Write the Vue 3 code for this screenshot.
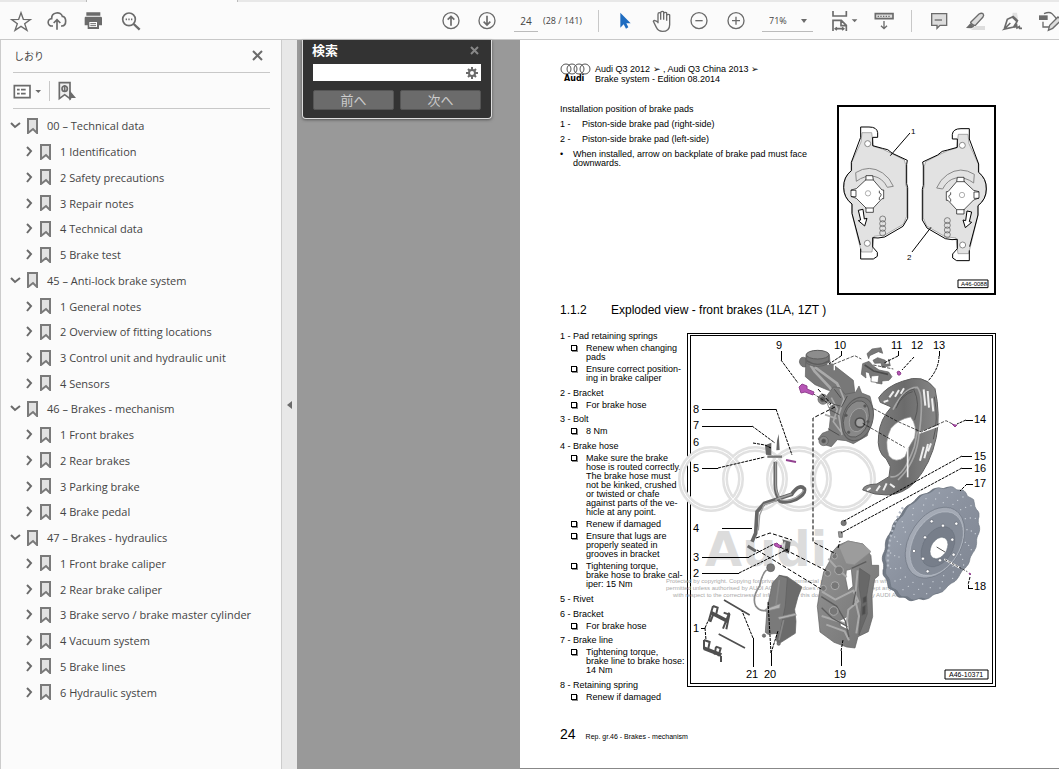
<script setup>
import { ref } from 'vue'

const page = ref('24')
const scale = ref('71%')
const query = ref('')

const chapters = [
  ['00 – Technical data', ['1 Identification', '2 Safety precautions', '3 Repair notes', '4 Technical data', '5 Brake test']],
  ['45 – Anti-lock brake system', ['1 General notes', '2 Overview of fitting locations', '3 Control unit and hydraulic unit', '4 Sensors']],
  ['46 – Brakes - mechanism', ['1 Front brakes', '2 Rear brakes', '3 Parking brake', '4 Brake pedal']],
  ['47 – Brakes - hydraulics', ['1 Front brake caliper', '2 Rear brake caliper', '3 Brake servo / brake master cylinder', '4 Vacuum system', '5 Brake lines', '6 Hydraulic system']],
]
const rows = chapters.flatMap(([title, kids]) => [
  { title, top: true },
  ...kids.map((k) => ({ title: k, top: false })),
])

const parts = [
  ['1 - Pad retaining springs', [['Renew when changing', 'pads'], ['Ensure correct position-', 'ing in brake caliper']]],
  ['2 - Bracket', [['For brake hose']]],
  ['3 - Bolt', [['8 Nm']]],
  ['4 - Brake hose', [
    ['Make sure the brake', 'hose is routed correctly.', 'The brake hose must', 'not be kinked, crushed', 'or twisted or chafe', 'against parts of the ve-', 'hicle at any point.'],
    ['Renew if damaged'],
    ['Ensure that lugs are', 'properly seated in', 'grooves in bracket'],
    ['Tightening torque,', 'brake hose to brake cal-', 'iper: 15 Nm'],
  ]],
  ['5 - Rivet', []],
  ['6 - Bracket', [['For brake hose']]],
  ['7 - Brake line', [['Tightening torque,', 'brake line to brake hose:', '14 Nm']]],
  ['8 - Retaining spring', [['Renew if damaged']]],
]

// Tilted ellipse used for the brake disc and everything drilled into it
const tilt = (31 * Math.PI) / 180
function onDisc(cx, cy, k, angle) {
  const u = 129 * k * Math.cos(angle)
  const v = 191 * k * Math.sin(angle)
  return [
    Math.round(cx + u * Math.cos(tilt) + v * Math.sin(tilt)),
    Math.round(cy + u * Math.sin(tilt) - v * Math.cos(tilt)),
  ]
}
function ring(cx, cy, k, ripple = 0) {
  const pts = []
  for (let i = 0; i < 180; i++) {
    const a = (i / 180) * Math.PI * 2
    pts.push(onDisc(cx, cy, k * (1 + ripple * Math.cos(a * 20)), a).join(' '))
  }
  return 'M' + pts.join('L') + 'Z'
}
const drillHoles = []
for (let i = 0; i < 20; i++) {
  const a = (i / 20) * Math.PI * 2
  drillHoles.push(onDisc(744, 130, 0.69, a + 0.1), onDisc(744, 130, 0.78, a + 0.03), onDisc(744, 130, 0.87, a - 0.05))
}
const boltHoles = Array.from({ length: 10 }, (_, i) => onDisc(755, 133, i % 2 ? 0.32 : 0.46, (i / 10) * Math.PI * 2))

const labels = [
  [9, 776, 349], [10, 834, 349], [11, 891, 349], [12, 911, 349], [13, 933, 349],
  [8, 693, 413], [7, 693, 429], [6, 693, 446], [5, 693, 472], [14, 974, 423],
  [15, 974, 460], [16, 974, 472], [17, 974, 487], [4, 693, 532], [3, 693, 561],
  [2, 693, 577], [18, 974, 590], [1, 693, 632], [21, 746, 678], [20, 764, 678], [19, 834, 678],
]
</script>

<template>
  <div class="viewer">
    <div class="tabs"><span class="tab"></span></div>
    <header class="toolbar">
      <div class="group files">
        <button aria-label="Star"><svg viewBox="27 30 72 66"><path d="M63 38l7 20 21 1-17 12 7 20-18-12-18 12 7-20-17-12 21-1z" fill="none" /></svg></button>
        <button aria-label="Upload"><svg viewBox="135 30 72 66"><path d="M159 78h-3a11 11 0 0 1-1-22c-1-20 28-23 32-7 13-1 14 29-1 29h-3" fill="none" stroke-width="5" /><path d="M171 89V60M161 69l10-10 10 10" fill="none" stroke-width="5" /></svg></button>
        <button aria-label="Print"><svg viewBox="243 30 72 66"><path class="solid" d="M259 37h42v10h-42zM257 50h45q4 0 4 4v22h-9v11h-34V76h-9V54q0-4 3-4z" /><path d="M268 66h23v15h-23z" fill="#fff" stroke="none" /><path d="M271 71h17M271 77h17" stroke-width="3" /></svg></button>
        <button class="find" aria-label="Search"><svg viewBox="357 30 72 66"><circle cx="387" cy="58" r="19" fill="none" stroke-width="5" /><path d="M401 72l18 17" stroke-width="7" /><path d="M377 58h4m4 0h4m4 0h4" stroke-width="5" /></svg></button>
      </div>
      <div class="group pages">
        <button aria-label="Previous page"><svg viewBox="57 30 72 66"><circle cx="93" cy="62" r="24" fill="none" /><path d="M93 77V50M83 59l10-10 10 10" fill="none" stroke-width="5" /></svg></button>
        <button aria-label="Next page"><svg viewBox="167 30 72 66"><circle cx="203" cy="62" r="24" fill="none" /><path d="M203 47v27M193 65l10 10 10-10" fill="none" stroke-width="5" /></svg></button>
        <input v-model="page" class="page-number" aria-label="Page" />
        <span class="count">(28 / 141)</span>
      </div>
      <span class="divider"></span>
      <div class="group tools">
        <button aria-label="Select"><svg viewBox="580 30 72 66"><path d="M602 38v45l10-10 7 13 7-4-6-12h13z" fill="#1f6cc0" stroke="none" /></svg></button>
        <button aria-label="Pan"><svg viewBox="691 30 72 66"><path d="M715 70V43q0-5 4-5t4 5v16-20q0-5 5-5t4 5v20-17q0-5 5-5t4 5v20-14q0-5 5-5t4 5v26q0 20-22 20-13 0-18-12l-9-18q3-6 14 3z" fill="none" /></svg></button>
        <button aria-label="Zoom out"><svg viewBox="800 30 72 66"><circle cx="836" cy="62" r="24" fill="none" /><path d="M825 62h22" /></svg></button>
        <button aria-label="Zoom in"><svg viewBox="910 30 72 66"><circle cx="946" cy="62" r="24" fill="none" /><path d="M934 62h24M946 50v24" /></svg></button>
      </div>
      <label class="zoom">
        <select v-model="scale" aria-label="Zoom level"><option>71%</option><option>100%</option></select>
        <svg class="caret" viewBox="0 0 6 4"><path class="solid" d="M0 0h6L3 4z" /></svg>
      </label>
      <div class="group view">
        <button class="wide" aria-label="Fit page"><svg viewBox="270 30 90 66"><path d="M279 33v15h40V33M279 93V61h25l15 15v17M303 61v16h16M287 86h23M291 82l-5 4 5 4M306 82l5 4-5 4" fill="none" stroke-width="5" /><path class="solid" d="M335 58h17l-8 9z" /></svg></button>
        <button aria-label="Reading mode"><svg viewBox="403 30 72 66"><path d="M413 41h53v15h-53z" fill="#ddd" stroke-width="5" /><path d="M420 49h4m4 0h4m4 0h4m4 0h4m4 0h4M439 63v23M430 77l9 9 9-9" fill="none" /></svg></button>
      </div>
      <span class="divider"></span>
      <div class="group notes">
        <button aria-label="Comment"><svg viewBox="567 30 72 66"><path d="M581 41h45v35h-20l-9 9v-9h-16z" fill="#ddd" /><path d="M590 60h22" /></svg></button>
        <button aria-label="Highlight"><svg viewBox="678 30 72 66"><path d="M711 78h30v12h-42z" fill="#ddd" stroke="none" /><path d="M698 67l25-25q7-4 12-1 4 4 0 10l-23 25q-9 1-14-9z" fill="#ddd" /><path class="solid" d="M697 70l12 10-9 5-16-1z" /></svg></button>
        <button aria-label="Sign"><svg viewBox="786 30 72 66"><path d="M821 38h13l3 18h-19z" fill="#e2e2e2" stroke="none" /><path d="M796 86l9-28 15-7 14 14-10 16-28 6 18-18M821 48l16 15M826 83l7-7 1 8 7-4 1 5h7" fill="none" stroke-width="5" /></svg></button>
        <button aria-label="Edit"><svg viewBox="900 30 72 66"><path d="M918 41q16-7 24 0l12 13v12M915 65v16h18" fill="none" /><path class="solid" d="M903 46h26v14h-26z" /><path d="M931 91l4-15 25-25 10 9-26 25z" fill="#ddd" /></svg></button>
      </div>
    </header>

    <main class="body">
      <aside class="bookmarks">
        <div class="head"><h2>しおり</h2><button aria-label="Close"><svg viewBox="0 0 11 11"><path d="M1 1l9 9M10 1l-9 9" stroke-width="2" /></svg></button></div>
        <div class="options">
          <button class="list" aria-label="Options"><svg viewBox="40 240 90 60"><path d="M44 254h47v36H44z" fill="#fff" /><path d="M52 266h8m4 0h14M52 278h8m4 0h14" stroke-width="5" /><path class="solid" d="M107 267h17l-8 9z" /></svg></button>
          <button class="locate" aria-label="Find bookmark"><svg viewBox="172 240 60 60"><path d="M179 245h32v48l-16-12-16 12z" fill="#eee" stroke-width="5" /><circle cx="195" cy="263" r="8" fill="none" /><path d="M195 252v20" /><path class="solid" d="M209 267v32l7-8h13z" /></svg></button>
        </div>
        <ul class="tree">
          <li v-for="row in rows" :key="row.title" :class="{ child: !row.top }">
            <button :aria-label="row.top ? 'Collapse' : 'Expand'">
              <svg viewBox="0 0 11 11"><path :d="row.top ? 'M1 3l4 4 5-4' : 'M4 1l4 4-4 5'" fill="none" /></svg>
            </button>
            <svg class="mark" viewBox="0 0 11 16"><path d="M1 1h9v14l-4-4-5 4z" fill="#e2e2e2" /></svg>
            <a href="#">{{ row.title }}</a>
          </li>
        </ul>
      </aside>
      <button class="splitter" aria-label="Hide bookmarks"><svg viewBox="0 0 5 8"><path class="solid" d="M5 0v8L0 4z" /></svg></button>

      <section class="canvas">
        <form class="search" @submit.prevent>
          <div class="search-head"><h2>検索</h2><button aria-label="Close search"><svg viewBox="0 0 9 9"><path d="M1 1l7 7M8 1L1 8" /></svg></button></div>
          <div class="field">
            <input v-model="query" aria-label="検索" />
            <svg viewBox="0 0 12 12"><circle cx="6" cy="6" r="3" fill="none" stroke-width="2" /><path d="M6 0v3M6 9v3M0 6h3M9 6h3M2 2l2 2M8 8l2 2M10 2L8 4M4 8l-2 2" stroke-width="2" /></svg>
          </div>
          <div class="steps"><button>前へ</button><button>次へ</button></div>
        </form>
      </section>

      <article class="sheet">
        <div class="title">
          <svg viewBox="0 0 32 20"><g fill="none" stroke="#555"><circle cx="6" cy="6" r="5" /><circle cx="12" cy="6" r="5" /><circle cx="19" cy="6" r="5" /><circle cx="25" cy="6" r="5" /></g><text class="brand" x="4" y="18" font-size="8">Audi</text></svg>
          <p>Audi Q3 2012 ➢ , Audi Q3 China 2013 ➢<br />Brake system - Edition 08.2014</p>
        </div>

        <div class="intro">
          <div class="install">
            <h3>Installation position of brake pads</h3>
            <p><span>1 -</span>Piston-side brake pad (right-side)</p>
            <p><span>2 -</span>Piston-side brake pad (left-side)</p>
            <p class="dot"><span>•</span>When installed, arrow on backplate of brake pad must face downwards.</p>
          </div>
          <svg class="pads" viewBox="837 105 159 190">
            <path d="M838 106h157v188H838z" fill="#fff" stroke="#000" stroke-width="2" />
            <g transform="translate(830 98) scale(.3333)" stroke="#000" stroke-width="3">
              <g id="pad">
                <path d="M92 87h25q24 0 26 17v14h-15v25l29 8q18 1 30 15l45 21-4 12v58l3 12v92l-12 24-55 32-20 3-12-1v28l14 16v12l-12 8H92v-31l-26-96v-28q-24-19-25-50 0-34 24-51v-25l28-61z" fill="#fff" stroke="none" />
                <path d="M96 104h29l5 41 27 8 29 14 37 19 4 14v58l3 12v85l-10 24-55 32-33 4-6 47H94l-28-115v-28q-24-19-25-50 0-34 24-51v-25l28-61z" fill="#e2e2e2" stroke="#888" stroke-width="2" />
                <path d="M92 118V87h25q24 0 26 17v14h-15v25l29 8q18 1 30 15l45 21-2 12v58l3 12v92l-14 24-55 32-20 3-16-1v28l14 16v12l-12 8H92v-31M92 118l-28 75v25q-24 19-23 50 0 31 25 50v28l25 95" fill="none" />
                <circle cx="113" cy="137" r="9" fill="#fff" stroke="#888" /><circle cx="112" cy="436" r="9" fill="#fff" stroke="#888" />
                <path d="M77 224q41-26 81 1 22 15 32 40l-18 3q-14-28-40-33-28-4-53 15z" fill="none" stroke="#888" />
                <path d="M108 233h20l2 13 26 30h5v26h-5l-26 28v13h-22v-13l-29-29-16-6v-19l16-4 29-27z" fill="#fff" stroke-width="2" /><path d="M63 277h15v19H63M106 246h24M106 330h24M148 278v7q11 3 0 14v7" fill="none" stroke-width="2" />
                <circle cx="114" cy="286" r="8" fill="none" stroke="#888" stroke-width="2" />
                <path d="M85 337l14-3 4 29 8-2-7 23-19-16 7-2z" fill="#fff" />
                <g fill="none" stroke="#555" stroke-width="2"><circle cx="158" cy="363" r="9" /><circle cx="158" cy="377" r="9" /><circle cx="158" cy="391" r="9" /><circle cx="158" cy="405" r="9" /></g>
              </g>
              <use href="#pad" transform="translate(510 5) scale(-1 1)" />
              <path d="M240 105l-59 68M246 462l57-74" fill="none" />
              <path d="M384 546h90v23h-90z" fill="#fff" />
            </g>
            <g font-size="8"><text x="911" y="134">1</text><text x="907" y="260">2</text><text x="961" y="286" font-size="6">A46-0088</text></g>
          </svg>
        </div>

        <h1><span>1.1.2</span>Exploded view - front brakes (1LA, 1ZT )</h1>

        <div class="exploded">
          <div class="parts">
            <section v-for="[name, notes] in parts" :key="name">
              <h3>{{ name }}</h3>
              <div v-for="note in notes" :key="note[0]" class="note">
                <i></i>
                <p><template v-for="(line, n) in note" :key="line"><br v-if="n" />{{ line }}</template></p>
              </div>
            </section>
          </div>

          <svg class="drawing" viewBox="686 332 310 355">
            <defs>
              <linearGradient id="metal"><stop stop-color="#888" /><stop offset=".55" stop-color="#6b6b6b" /><stop offset="1" stop-color="#888" /></linearGradient>
              <linearGradient id="steel" x2="1" y2="1"><stop stop-color="#a0a8b5" /><stop offset=".5" stop-color="#8a919e" /><stop offset="1" stop-color="#7d8490" /></linearGradient>
              <linearGradient id="cast" x2="1" y2="1"><stop stop-color="#959595" /><stop offset=".5" stop-color="#838383" /><stop offset="1" stop-color="#727272" /></linearGradient>
            </defs>
            <g fill="none" stroke="#000" shape-rendering="crispEdges"><path d="M687 333h308v353H687z" fill="#fff" /><path d="M690 335h302v348H690z" /></g>
            <g fill="none" stroke="#e1e1e1" stroke-width="6"><circle cx="711" cy="479" r="30" /><circle cx="755" cy="479" r="30" /><circle cx="799" cy="479" r="30" /><circle cx="843" cy="479" r="30" /></g>
            <g fill="none" stroke="#fff" stroke-width="1"><circle cx="711" cy="479" r="30" /><circle cx="755" cy="479" r="30" /><circle cx="799" cy="479" r="30" /><circle cx="843" cy="479" r="30" /></g>
            <text class="brand" x="705" y="566" font-size="48" fill="#dcdcdc">Audi</text>
            <g font-size="6" fill="#aaa">
              <text x="666" y="583">Protected by copyright. Copying for private or commercial purposes, in part or in whole, is not</text>
              <text x="666" y="590">permitted unless authorised by AUDI AG. AUDI AG does not guarantee or accept any liability</text>
              <text x="673" y="597">with respect to the correctness of information in this document. Copyright by AUDI AG.</text>
            </g>

            <g transform="translate(790 330) scale(.3333)" stroke="#5d5d5d" stroke-width="2">
              <!-- wheel bearing housing -->
              <path d="M48 84q-18-8-20 12 5 19 22 14z" fill="#777" />
              <path d="M48 74q34-22 70 0l2 22 20 16 50 39 5 41-24 9-26-16-30-4-40-17-29-24z" fill="#787878" />
              <path d="M62 106l12 18 45 48 8 13M74 111l67 49 18 36" fill="none" stroke="#aaa" stroke-width="8" />
              <path d="M50 78v22q32 19 66 0V77" fill="#777" /><ellipse cx="83" cy="74" rx="34" ry="13" fill="#8d8d8d" stroke-width="3" />
              <path d="M50 92q32 22 68 0" fill="none" stroke-width="4" />
              <path d="M112 103l21-8v26" fill="none" stroke="#fff" stroke-width="4" />
              <path d="M112 195l18-24 20 2 15 20 32-6 10-19 8 21 25 10 10 40-18 78-42 24-22-9-26-3-18 21-25-7-15-16 13-17 20-8 5-48z" fill="#7c7c7c" />
              <path d="M124 203l18 34-12 38 23 30M150 177l12 30-16 48 10 60M105 254l35 12" fill="none" stroke="#aaa" stroke-width="5" />
              <path d="M133 178l20 26M120 240l28 14M114 296l34 20M172 198l-18 34M127 222l24 6" fill="none" stroke="#4f4f4f" stroke-width="3" />
              <circle cx="99" cy="208" r="15" fill="#888" /><circle cx="98" cy="208" r="7" fill="#555" /><path d="M110 215l22 7-15 12z" fill="#fff" />
              <circle cx="101" cy="333" r="14" fill="#888" /><circle cx="101" cy="333" r="6" fill="#555" />
              <ellipse cx="203" cy="267" rx="45" ry="67" transform="rotate(17 203 267)" fill="#777" stroke-width="3" /><ellipse cx="199" cy="267" rx="37" ry="56" transform="rotate(17 199 267)" fill="#888" stroke="#4c4c4c" /><ellipse cx="204" cy="270" rx="25" ry="36" transform="rotate(17 204 270)" fill="#777" stroke="#aaa" /><circle cx="210" cy="278" r="14" fill="#a2a2a2" stroke="#4c4c4c" stroke-width="5" />
              <g fill="#555"><circle cx="168" cy="256" r="4" /><circle cx="176" cy="307" r="4" /><circle cx="225" cy="228" r="4" /><circle cx="234" cy="275" r="4" /></g>

              <!-- pad carrier clips -->
              <path d="M231 71l15-14 27-4 5 17-13-5-26 12-3 9zM249 91l14-8 23 8v12l12-1-2-15 5 20-25 5-3-13-19 1zM218 101l19-7 13 14 17 12 29 6 10 14-9 11-21 2v9l-18-3v-13l-16-2-5-16-11-3 2 19-14-11z" fill="#777" />
              <path d="M244 138l-1 17 21 3 3-22z" fill="#fff" /><path d="M224 105l27 18 43 10" fill="none" stroke="#4c4c4c" stroke-width="5" />

              <!-- splash shield -->
              <path d="M266 203q24-34 71-49 63-26 98 22 17 78 4 146-17 81-64 134-34 37-83 39l-37-3-37-12q2-17 43-18l36-22 4-30-12-23q-30-21-23-73 4-46 38-83l-33-14z" fill="url(#metal)" stroke-width="3" />
              <path d="M303 295q23-28 59-34 20 26 12 62-21 31-29 57-28 22-48-2-16-42 6-83z" fill="#fff" stroke="#999" />
              <path d="M309 239q34-68 73-67 23 24 3 158-11 73-61 120M301 440q37 9 72-90l9-45" fill="none" stroke="#a5a5a5" stroke-width="5" />
              <path d="M322 225q18-43 52-48M318 235q20-44 50-50M372 180q20 40 2 90M433 200q13 70-3 128" fill="none" stroke="#555" stroke-width="3" />
              <g fill="none" stroke="#eee" stroke-width="6"><path d="M298 202l13-18M315 200l12-20M332 191l10-16M281 216l14-5M401 178l5 49M413 183l4 50M426 205l4 39M401 350l-11 42M414 342l-11 43M423 340l-9 24M231 481l11-7M259 483l11-16M280 481l10-21M300 462l14 10" /><path d="M353 354v88" stroke-width="5" /></g>
              <path d="M388 309l57-21" stroke="#fff" stroke-width="5" />
              <g fill="none" stroke="#000" stroke-dasharray="10 4"><path d="M251 236l71 38 72 32 74-34 22 11M218 280l126 72M130 103l64-26 20 10M250 105l60 12M68 190l62 40" /></g>
            </g>

            <g transform="translate(685 500) scale(.3333)" stroke-width="2">
              <!-- brake disc -->
              <path :d="ring(734, 132, .95, .018)" fill="#737b87" stroke="#575f6b" />
              <path :d="ring(742, 130, .95, .018)" fill="url(#steel)" stroke="#6d7581" />
              <path d="M654 22q-48 75-45 178" fill="none" stroke="#b4bbc6" stroke-width="7" stroke-dasharray="6 9" />
              <path :d="ring(750, 128, .6)" fill="#a4aab5" stroke="#69717d" />
              <path :d="ring(755, 131, .54)" fill="#858c98" stroke="#bcc2cb" />
              <path :d="ring(759, 140, .34)" fill="#777e8a" stroke="#69717d" />
              <path :d="ring(762, 144, .18)" fill="#fff" stroke="#6d7581" />
              <circle v-for="(p, i) in drillHoles" :key="'d' + i" :cx="p[0]" :cy="p[1]" r="2" fill="#ccd2da" />
              <circle v-for="(p, i) in boltHoles" :key="'b' + i" :cx="p[0]" :cy="p[1]" r="5" fill="#fff" stroke="#5d6470" />
              <path d="M755 141l25 15" stroke="#000" /><path d="M778 178l46 25" stroke="#fff" stroke-width="5" /><path d="M780 179l67 36" stroke="#000" stroke-dasharray="8 4" />

              <!-- caliper -->
              <g stroke="#5d5d5d">
                <path d="M440 158l20-22 29-13 45 9 24 35 2 29h21v31l-12 10-8 48 2 65-13 45-31 15-9 34-25-3-38-14-42-31-8-77 8-51 11-52 17-31z" fill="url(#cast)" />
                <path d="M461 140l22 51 25 4 50-40-24-23-45-9z" fill="#9c9c9c" stroke="#888" />
                <path d="M484 211l15-4 5 52-15 13-7-36z" fill="#fff" /><path d="M465 361l25-13 2 43-26-13z" fill="#fff" />
                <path d="M411 275l40 24 54-27 15 32-30 25-5 43-75-24M424 374l55 20 13 27M430 176l25 28 30 27M518 211l-8 85 12 52-8 52" fill="none" stroke="#aaa" stroke-width="6" />
                <path d="M524 205l31 21-10 62 2 54-25 63 8-96-8-50z" fill="#686868" /><path d="M409 290l46 29 26 44 11 48M410 323l31 31 47 26M500 205l44-20M512 275l-8 40" fill="none" stroke-width="4" />
                <g fill="#777" stroke="#aaa" stroke-width="3"><circle cx="462" cy="211" r="13" /><circle cx="450" cy="257" r="12" /><circle cx="446" cy="333" r="13" /><circle cx="449" cy="169" r="8" /><circle cx="415" cy="265" r="9" /><circle cx="428" cy="220" r="9" /></g>
                <path d="M532 321l10-6-1 26-10 5zM534 293l10-5v17l-10 5z" fill="#4c4c4c" />

                <!-- brake pads with wear sensor -->
                <path d="M282 226l25 4 44 31-12 29-10 38 4 36-2 36-52 33-6-16 12-78-5-36z" fill="#6b6b6b" />
                <path d="M262 250l21-24 24 8-6 83-16 82-36 4-8-6 5-68z" fill="#7a7a7a" />
                <path d="M283 240l-10 76M250 345l-6 50M296 360l-14 60" stroke="#888" stroke-width="5" />
                <path d="M241 328l45-17-2 13-42 10zM279 352l52-12 3 6-51 12z" fill="#b3b3b3" stroke="#888" />
                <circle cx="257" cy="203" r="12" fill="#777" /><path d="M245 210q-15 13-21 48-24 34-12 60 13 18 36 13" fill="none" stroke="#8a8a8a" stroke-width="5" />
                <circle cx="237" cy="407" r="5" fill="#777" /><circle cx="281" cy="431" r="5" fill="#777" />
                <circle cx="476" cy="69" r="8" fill="#777" /><path d="M460 95h12v17h-10z" fill="#999" />
              </g>

              <!-- retaining springs and pins -->
              <g fill="none" stroke="#4f4f4f"><path d="M78 338l51 26M57 445l52 20" stroke-width="11" /><path d="M84 318l-13 46M84 318l14 5-5 22M86 340l-10 26M133 338l-19 48M116 338l17 6-9 44M57 420v28M57 420l17 6-5 24M93 440l14 5-7 24M93 440l-4 24M108 468v18" stroke-width="6" /></g>
              <path d="M117 300l77 45M101 402l79 42" stroke="#4f4f4f" stroke-width="5" />

              <!-- brake hose, line and brackets -->
              <path d="M271-115v70q0 25 14 48 18 8 48-5 30-16 25-32-15-16-38 17l-49 16-33 11-22 25-4 65-11 25" fill="none" stroke="#666" stroke-width="11" />
              <path d="M272-115v69q0 23 15 45 18 7 47-7 21-15 21-22M276 2l-39 12-13 32-4 45M320-18l-49 17" fill="none" stroke="#a0a0a0" stroke-width="4" />
              <path d="M188 138l25 16" stroke="#666" stroke-width="9" /><path d="M276-178l5-20 3 48-10 1zM240-164l19-8v38l-16-2z" fill="#666" /><path d="M247-130h44" stroke="#777" stroke-width="7" />
              <path d="M292 118l25 8-5 35-17-7 2-20z" fill="#666" /><path d="M300 125l-3 23" stroke="#ccc" stroke-width="4" />
            </g>

            <g fill="#b756b6" stroke="#91418f">
              <path d="M799 387l3-3 5 2v3l7 3-1 3-8-3-4 1z" stroke-width="1" /><path d="M897 372l2-1 2 2-1 2-2 0zM952 424l3 1 2 0-2 2zM774 544l3-1 2 2 3 1-2 2-5-2zM969 573l2 1-1 1z" /><path d="M786 460l10 2" stroke-width="2" />
            </g>

            <g class="leader">
              <path shape-rendering="crispEdges" d="M702 409h74M702 426h50M702 468h16M722 528h30M702 557h47M702 573h37M701 628h4M781 351v9M841 351v5M841 651v15M771 653v13M753 638v29M962 456h10M962 468h10M966 420h7M967 484h6M968 585v3h5M898 351v5M939 351v5" />
              <path stroke-dasharray="3 1" d="M776 409l16 46M752 426l23 17M753 443l12 2 6 3M718 468l47-11M781 360l17 23M841 356l-12 8M898 356l-14 7M914 357l-12 13M939 356q0 13-11 25M966 420l-9 4M962 456l-118 65M962 468l-121 65M967 484l-7 7M749 557l25-13M739 573l49-24M705 628l3-7M705 628l1 12M753 638l-11-27M771 653l-3-52M771 653l7-22M841 651l2-11M970 577l-2 8" />
              <path stroke-dasharray="4 2" d="M818 389l13 15M835 407l-22 11v124l23 12M756 538l14-5 22 7M780 547l47 24M757 550l64 39M838 548l2-7" />
            </g>
            <g class="numbers"><text v-for="[n, x, y] in labels" :key="n" :x="x" :y="y">{{ n }}</text></g>
            <path d="M945 670h43v9h-43z" fill="#fff" stroke="#000" /><text x="949" y="677" font-size="7">A46-10371</text>
          </svg>
        </div>
        <footer><b>24</b><span>Rep. gr.46 - Brakes - mechanism</span></footer>
      </article>
    </main>
  </div>
</template>

<style>
body { overflow: hidden; }
</style>

<style scoped>
* { box-sizing: border-box; }
.viewer { display: flex; flex-direction: column; height: 100vh; font-family: "Open Sans", "Noto Sans CJK JP", sans-serif; background: #fbfbfb; color: #444; overflow: hidden; }
button { padding: 0; border: 0; background: none; font: inherit; color: inherit; }
svg { display: block; flex: none; stroke: #6b6b6b; }
svg text { stroke: none; font-family: "Liberation Sans", Arial, sans-serif; }
svg .brand { font-family: "DejaVu Sans", sans-serif; font-weight: 700; }
.solid { fill: #6b6b6b; stroke: none; }
h1, h2, h3, p, ul { margin: 0; padding: 0; font-weight: 400; }
.tabs { flex: none; height: 2px; padding-left: 86px; background: #e8e8e8; }
.tab { display: block; width: 152px; height: 2px; background: #fbfbfb; border: solid #bbb; border-width: 0 1px; }
.toolbar { flex: none; display: flex; height: 38px; padding: 8px 0 0 9px; border-bottom: 1px solid #c8c8c8; overflow: hidden; }
.toolbar svg { stroke-width: 4; }
.group { display: flex; flex: none; gap: 12px; }
.group button { flex: none; width: 24px; height: 22px; }
.group button svg { width: 24px; height: 22px; }
.group .wide, .group .wide svg { width: 30px; }
.group .find { margin-left: 2px; }
.pages { width: 159px; margin-left: 296px; }
.page-number { width: 24px; height: 22px; margin-left: 3px; padding: 0; border: 0; border-bottom: 1px solid #bbb; background: none; font: 10px "Open Sans", sans-serif; color: #444; text-align: center; }
.count { margin-left: -7px; font-size: 9px; line-height: 22px; white-space: nowrap; }
.divider { flex: none; width: 1px; height: 22px; background: #c8c8c8; }
.tools { margin-left: 14px; gap: 13px; }
.zoom { display: flex; flex: none; align-items: center; width: 51px; height: 22px; margin-left: 14px; padding-right: 6px; border-bottom: 1px solid #bbb; }
.zoom select { width: 39px; height: 20px; padding: 0 0 0 7px; border: 0; appearance: none; background: none; font: 9px "Open Sans", sans-serif; color: #444; }
.caret { width: 6px; height: 4px; }
.view { margin-left: 17px; }
.view + .divider { margin-left: 15px; }
.notes { margin-left: 15px; gap: 13px; }

.body { display: flex; flex: 1; min-height: 0; }
.bookmarks { flex: none; width: 282px; padding: 0 11px 0 12px; border: solid #ccc; border-width: 0 1px; overflow: hidden; }
.head { display: flex; justify-content: space-between; align-items: center; height: 33px; padding: 0 7px 2px 1px; border-bottom: 1px solid #c8c8c8; }
.head h2 { font: 10px "Noto Sans CJK JP", sans-serif; }
.head svg { width: 11px; height: 11px; }
.options { display: flex; align-items: center; height: 36px; border-bottom: 1px solid #c8c8c8; }
.options svg { stroke-width: 5; height: 20px; }
.list { padding-right: 6px; border-right: 1px solid #c8c8c8; }
.list svg { width: 30px; }
.locate { margin-left: 7px; }
.locate svg { width: 20px; }
.tree { display: grid; grid-auto-rows: 1fr; height: 592px; margin-top: 4px; list-style: none; }
.tree li { display: flex; align-items: center; margin-left: -3px; font-size: 11px; white-space: nowrap; }
.tree li.child { margin-left: 10px; }
.tree button svg { width: 11px; height: 11px; stroke-width: 2; }
.mark { width: 11px; height: 16px; margin: 0 9px 0 6px; stroke: #7a7a7a; stroke-width: 2; }
.tree a { color: #444; text-decoration: none; }
.splitter { display: flex; flex: none; align-items: center; width: 15px; padding: 0 5px; background: #e8e8e8; }
.splitter svg { width: 5px; height: 8px; }
.canvas { flex: none; width: 223px; padding-left: 5px; background: #999; }
.search { width: 190px; padding: 0 10px 8px; background: #333; border: 1px solid #ddd; border-top: 0; border-radius: 0 0 4px 4px; box-shadow: 0 1px 3px #555; }
.search-head { display: flex; justify-content: space-between; align-items: center; height: 20px; padding-right: 2px; margin-bottom: 4px; }
.search-head h2 { margin-left: -1px; font: 700 13px/18px "Noto Sans CJK JP", sans-serif; color: #fff; }
.search-head svg { width: 9px; height: 9px; stroke: #888; stroke-width: 2; }
.field { display: flex; align-items: center; height: 17px; padding-right: 3px; background: #fff; }
.field input { flex: 1; min-width: 0; height: 17px; padding: 0 3px; border: 0; outline: 0; background: none; }
.field svg { width: 12px; height: 12px; }
.steps { display: flex; gap: 6px; margin-top: 9px; }
.steps button { flex: 1; height: 20px; border: 1px solid #555; border-radius: 2px; background: #6b6b6b; color: #ccc; font: 13px/16px "Noto Sans CJK JP", sans-serif; }

.sheet { flex: 1; min-width: 0; margin-bottom: 1px; padding: 23px 63px 0 40px; background: #fff; color: #000; font: 9px/9px "Liberation Sans", Arial, sans-serif; box-shadow: 0 1px #888; }
.sheet h3 { font-size: 9px; }
.title { display: flex; gap: 3px; height: 42px; }
.title svg { width: 32px; height: 20px; stroke: none; }
.title p { line-height: 10px; padding-top: 1px; }
.intro { display: flex; justify-content: space-between; align-items: flex-start; }
.install { width: 254px; }
.install h3 { margin-bottom: 6px; }
.install p { display: flex; margin-bottom: 6px; }
.install span { flex: none; width: 22px; }
.install .dot span { width: 13px; }
.pads { width: 159px; height: 190px; stroke: none; }
h1 { display: flex; height: 37px; padding-top: 8px; font-size: 12px; line-height: 14px; }
h1 span { width: 51px; }
.exploded { display: flex; justify-content: space-between; }
.parts { display: flex; flex-direction: column; justify-content: space-between; gap: 5px; width: 124px; height: 370px; white-space: nowrap; }
.note { display: flex; margin-top: 3px; padding-left: 11px; }
.note i { flex: none; width: 6px; height: 6px; margin: 1px 9px 0 0; border: 1px solid #000; box-shadow: 1px 1px #888; }
.drawing { width: 310px; height: 355px; overflow: visible; stroke: none; }
.leader { fill: none; stroke: #000; stroke-width: 1; }
.numbers { font-size: 11px; }
footer { display: flex; align-items: baseline; gap: 10px; margin-top: 25px; }
footer b { font-size: 14px; font-weight: 400; line-height: 14px; }
footer span { font-size: 7px; }
</style>
